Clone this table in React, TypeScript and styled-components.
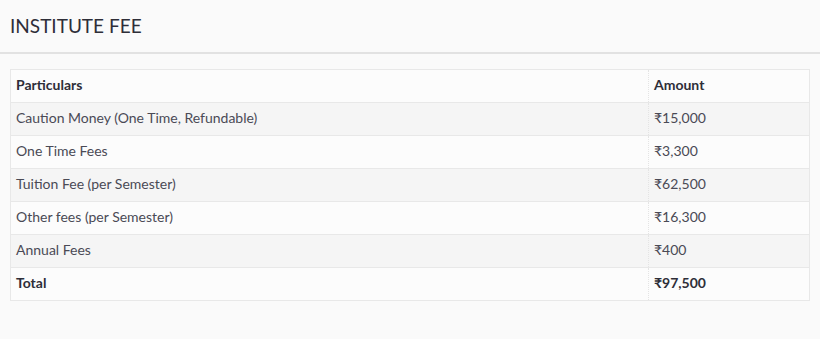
import React from "react";
import styled, { createGlobalStyle } from "styled-components";

const GlobalStyle = createGlobalStyle`
  html, body {
    margin: 0;
    padding: 0;
    background: #fafafa;
  }
  body {
    font-family: Lato, "Noto Sans", sans-serif;
  }
`;

const Page = styled.div`
  width: 820px;
  height: 339px;
  background: #fafafa;
`;

const Header = styled.div`
  height: 54px;
  border-bottom: solid 2px #e2e2e2;
  display: flex;
  align-items: center;
  padding: 0 0 2px 10px;
  box-sizing: border-box;
`;

const Title = styled.h2`
  margin: 0;
  font-size: 19px;
  font-weight: 400;
  color: #2e2e38;
`;

const Body = styled.div`
  padding: 15px 10px 0 10px;
`;

const Table = styled.table`
  width: 800px;
  border-collapse: collapse;
  border: solid 1px #e8e8e8;
  font-size: 14px;
`;

const Row = styled.tr<{ $striped?: boolean }>`
  height: 33px;
  background: ${(p) => (p.$striped ? "#f5f5f5" : "#fcfcfc")};
  border-bottom: solid 1px #e8e8e8;
`;

const Cell = styled.td<{ $bold?: boolean }>`
  padding: 0 5px 3px 5px;
  color: ${(p) => (p.$bold ? "#2e2e38" : "#4a4a55")};
  font-weight: ${(p) => (p.$bold ? 700 : 400)};
  vertical-align: middle;

  & + & {
    width: 150px;
    border-left: dotted 1px #e4e4e4;
  }
`;

const fees = [
  { name: "Caution Money (One Time, Refundable)", amount: "₹15,000" },
  { name: "One Time Fees", amount: "₹3,300" },
  { name: "Tuition Fee (per Semester)", amount: "₹62,500" },
  { name: "Other fees (per Semester)", amount: "₹16,300" },
  { name: "Annual Fees", amount: "₹400" },
];

const App = () => {
  return (
    <Page>
      <GlobalStyle />
      <Header>
        <Title>INSTITUTE FEE</Title>
      </Header>
      <Body>
        <Table>
          <tbody>
            <Row>
              <Cell $bold>Particulars</Cell>
              <Cell $bold>Amount</Cell>
            </Row>
            {fees.map((f, i) => (
              <Row key={f.name} $striped={i % 2 === 0}>
                <Cell>{f.name}</Cell>
                <Cell>{f.amount}</Cell>
              </Row>
            ))}
            <Row>
              <Cell $bold>Total</Cell>
              <Cell $bold>₹97,500</Cell>
            </Row>
          </tbody>
        </Table>
      </Body>
    </Page>
  );
};

export default App;
